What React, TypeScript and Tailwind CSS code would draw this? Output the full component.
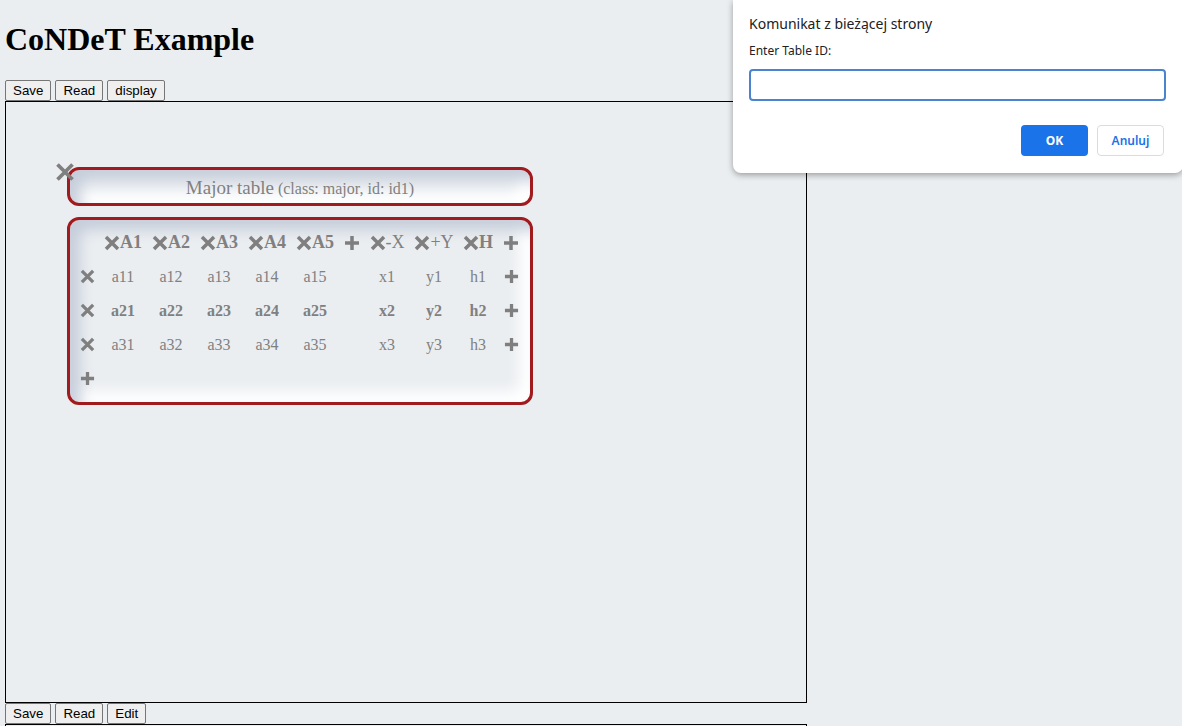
import React from "react";

const GRAY = "#7f7f7f";

function XIcon({ size = 16, stroke = 3.5 }: { size?: number; stroke?: number }) {
  return (
    <svg width={size} height={size} viewBox="0 0 16 16" className="shrink-0">
      <path d="M2 2L14 14M14 2L2 14" stroke={GRAY} strokeWidth={stroke} />
    </svg>
  );
}

function PlusIcon({ size = 16 }: { size?: number }) {
  return (
    <svg width={size} height={size} viewBox="0 0 16 16" className="shrink-0">
      <path d="M8 1V15M1 8H15" stroke={GRAY} strokeWidth={3.5} />
    </svg>
  );
}

const cols = ["A1", "A2", "A3", "A4", "A5"];
const tail = [
  { label: "-X", bold: false },
  { label: "+Y", bold: false },
  { label: "H", bold: true },
];
const rows = [
  { cells: ["a11", "a12", "a13", "a14", "a15"], extra: ["x1", "y1", "h1"], bold: false },
  { cells: ["a21", "a22", "a23", "a24", "a25"], extra: ["x2", "y2", "h2"], bold: true },
  { cells: ["a31", "a32", "a33", "a34", "a35"], extra: ["x3", "y3", "h3"], bold: false },
];

// column widths chosen so the cell centres land where the original table put them
const gridCols = "grid grid-cols-[34px_38px_58px_38px_58px_38px_36px_34px_60px_28px_38px]";
const cell = "flex h-[34px] items-center justify-center whitespace-nowrap";
const inset = "shadow-[inset_10px_10px_14px_#c6cedb,inset_-10px_-10px_14px_#ffffff]";

function ToolButton({ children }: { children: React.ReactNode }) {
  return (
    <button className="h-[21px] rounded-[2px] border border-[#767676] bg-[#efefef] px-[7px] text-[13.33px] leading-none text-black">
      {children}
    </button>
  );
}

function DataTable() {
  return (
    <div className={`w-[466px] rounded-[12px] border-[3px] border-[#a11a1d] py-[6px] ${inset}`}>
      <div className={`${gridCols} font-['Liberation_Serif',serif] text-[#808080]`}>
        <div className={cell} />
        {cols.map((c) => (
          <div key={c} className={cell}>
            <XIcon />
            <span className="text-[18px] font-bold">{c}</span>
          </div>
        ))}
        <div className={cell}>
          <PlusIcon />
        </div>
        {tail.map((t) => (
          <div key={t.label} className={cell}>
            <XIcon />
            <span className={`text-[18px] ${t.bold ? "font-bold" : ""}`}>{t.label}</span>
          </div>
        ))}
        <div className={cell}>
          <PlusIcon />
        </div>

        {rows.map((r, i) => (
          <React.Fragment key={i}>
            <div className={cell}>
              <XIcon size={15} />
            </div>
            {r.cells.map((c) => (
              <div key={c} className={`${cell} text-[16px] ${r.bold ? "font-bold" : ""}`}>
                {c}
              </div>
            ))}
            <div className={cell} />
            {r.extra.map((c) => (
              <div key={c} className={`${cell} text-[16px] ${r.bold ? "font-bold" : ""}`}>
                {c}
              </div>
            ))}
            <div className={cell}>
              <PlusIcon size={15} />
            </div>
          </React.Fragment>
        ))}

        <div className={cell}>
          <PlusIcon size={15} />
        </div>
      </div>
    </div>
  );
}

export default function App() {
  return (
    <div className="relative h-[726px] overflow-hidden bg-[#ebeef1] px-[5px] font-['Liberation_Serif',serif]">
      <h1 className="my-[21.44px] text-[32px] font-bold leading-[37px] text-black">CoNDeT Example</h1>

      <div className="flex gap-[4px] font-['Liberation_Sans',sans-serif]">
        <ToolButton>Save</ToolButton>
        <ToolButton>Read</ToolButton>
        <ToolButton>display</ToolButton>
      </div>

      <div className="h-[602px] w-[802px] border border-black pl-[61px] pt-[65px]">
        <div className="relative">
          <div className="absolute -left-[12px] -top-[5px]">
            <XIcon size={20} stroke={3} />
          </div>
          <div
            className={`flex h-[39px] w-[466px] items-baseline justify-center gap-[4px] rounded-[12px] border-[3px] border-[#a11a1d] pt-[4px] text-[#808080] ${inset}`}
          >
            <span className="text-[19px]">Major table</span>
            <span className="text-[16px]">(class: major, id: id1)</span>
          </div>
        </div>
        <div className="mt-[11px]">
          <DataTable />
        </div>
      </div>

      <div className="flex gap-[4px] font-['Liberation_Sans',sans-serif]">
        <ToolButton>Save</ToolButton>
        <ToolButton>Read</ToolButton>
        <ToolButton>Edit</ToolButton>
      </div>
      <div className="h-[40px] w-[802px] border border-black" />

      <div className="absolute right-[-1px] top-0 w-[450px] rounded-b-[8px] bg-white px-[16px] pb-[17px] pt-[14px] font-['Noto_Sans',sans-serif] shadow-[0_2px_6px_rgba(0,0,0,0.35)]">
        <div className="text-[14px] leading-[20px] text-[#202124]">Komunikat z bieżącej strony</div>
        <div className="mt-[9px] text-[12px] leading-[16px] text-[#202124]">Enter Table ID:</div>
        <input className="mt-[10px] block h-[32px] w-[417px] rounded-[4px] border-2 border-[#4a84cf] bg-white outline-none" />
        <div className="mt-[24px] flex justify-end gap-[9px] pr-[3px]">
          <button className="h-[31px] w-[67px] rounded-[4px] bg-[#1a73e8] text-[12px] font-bold text-white">OK</button>
          <button className="h-[31px] w-[67px] rounded-[4px] border border-[#dadce0] bg-white text-[12px] font-semibold text-[#1a73e8]">
            Anuluj
          </button>
        </div>
      </div>
    </div>
  );
}
